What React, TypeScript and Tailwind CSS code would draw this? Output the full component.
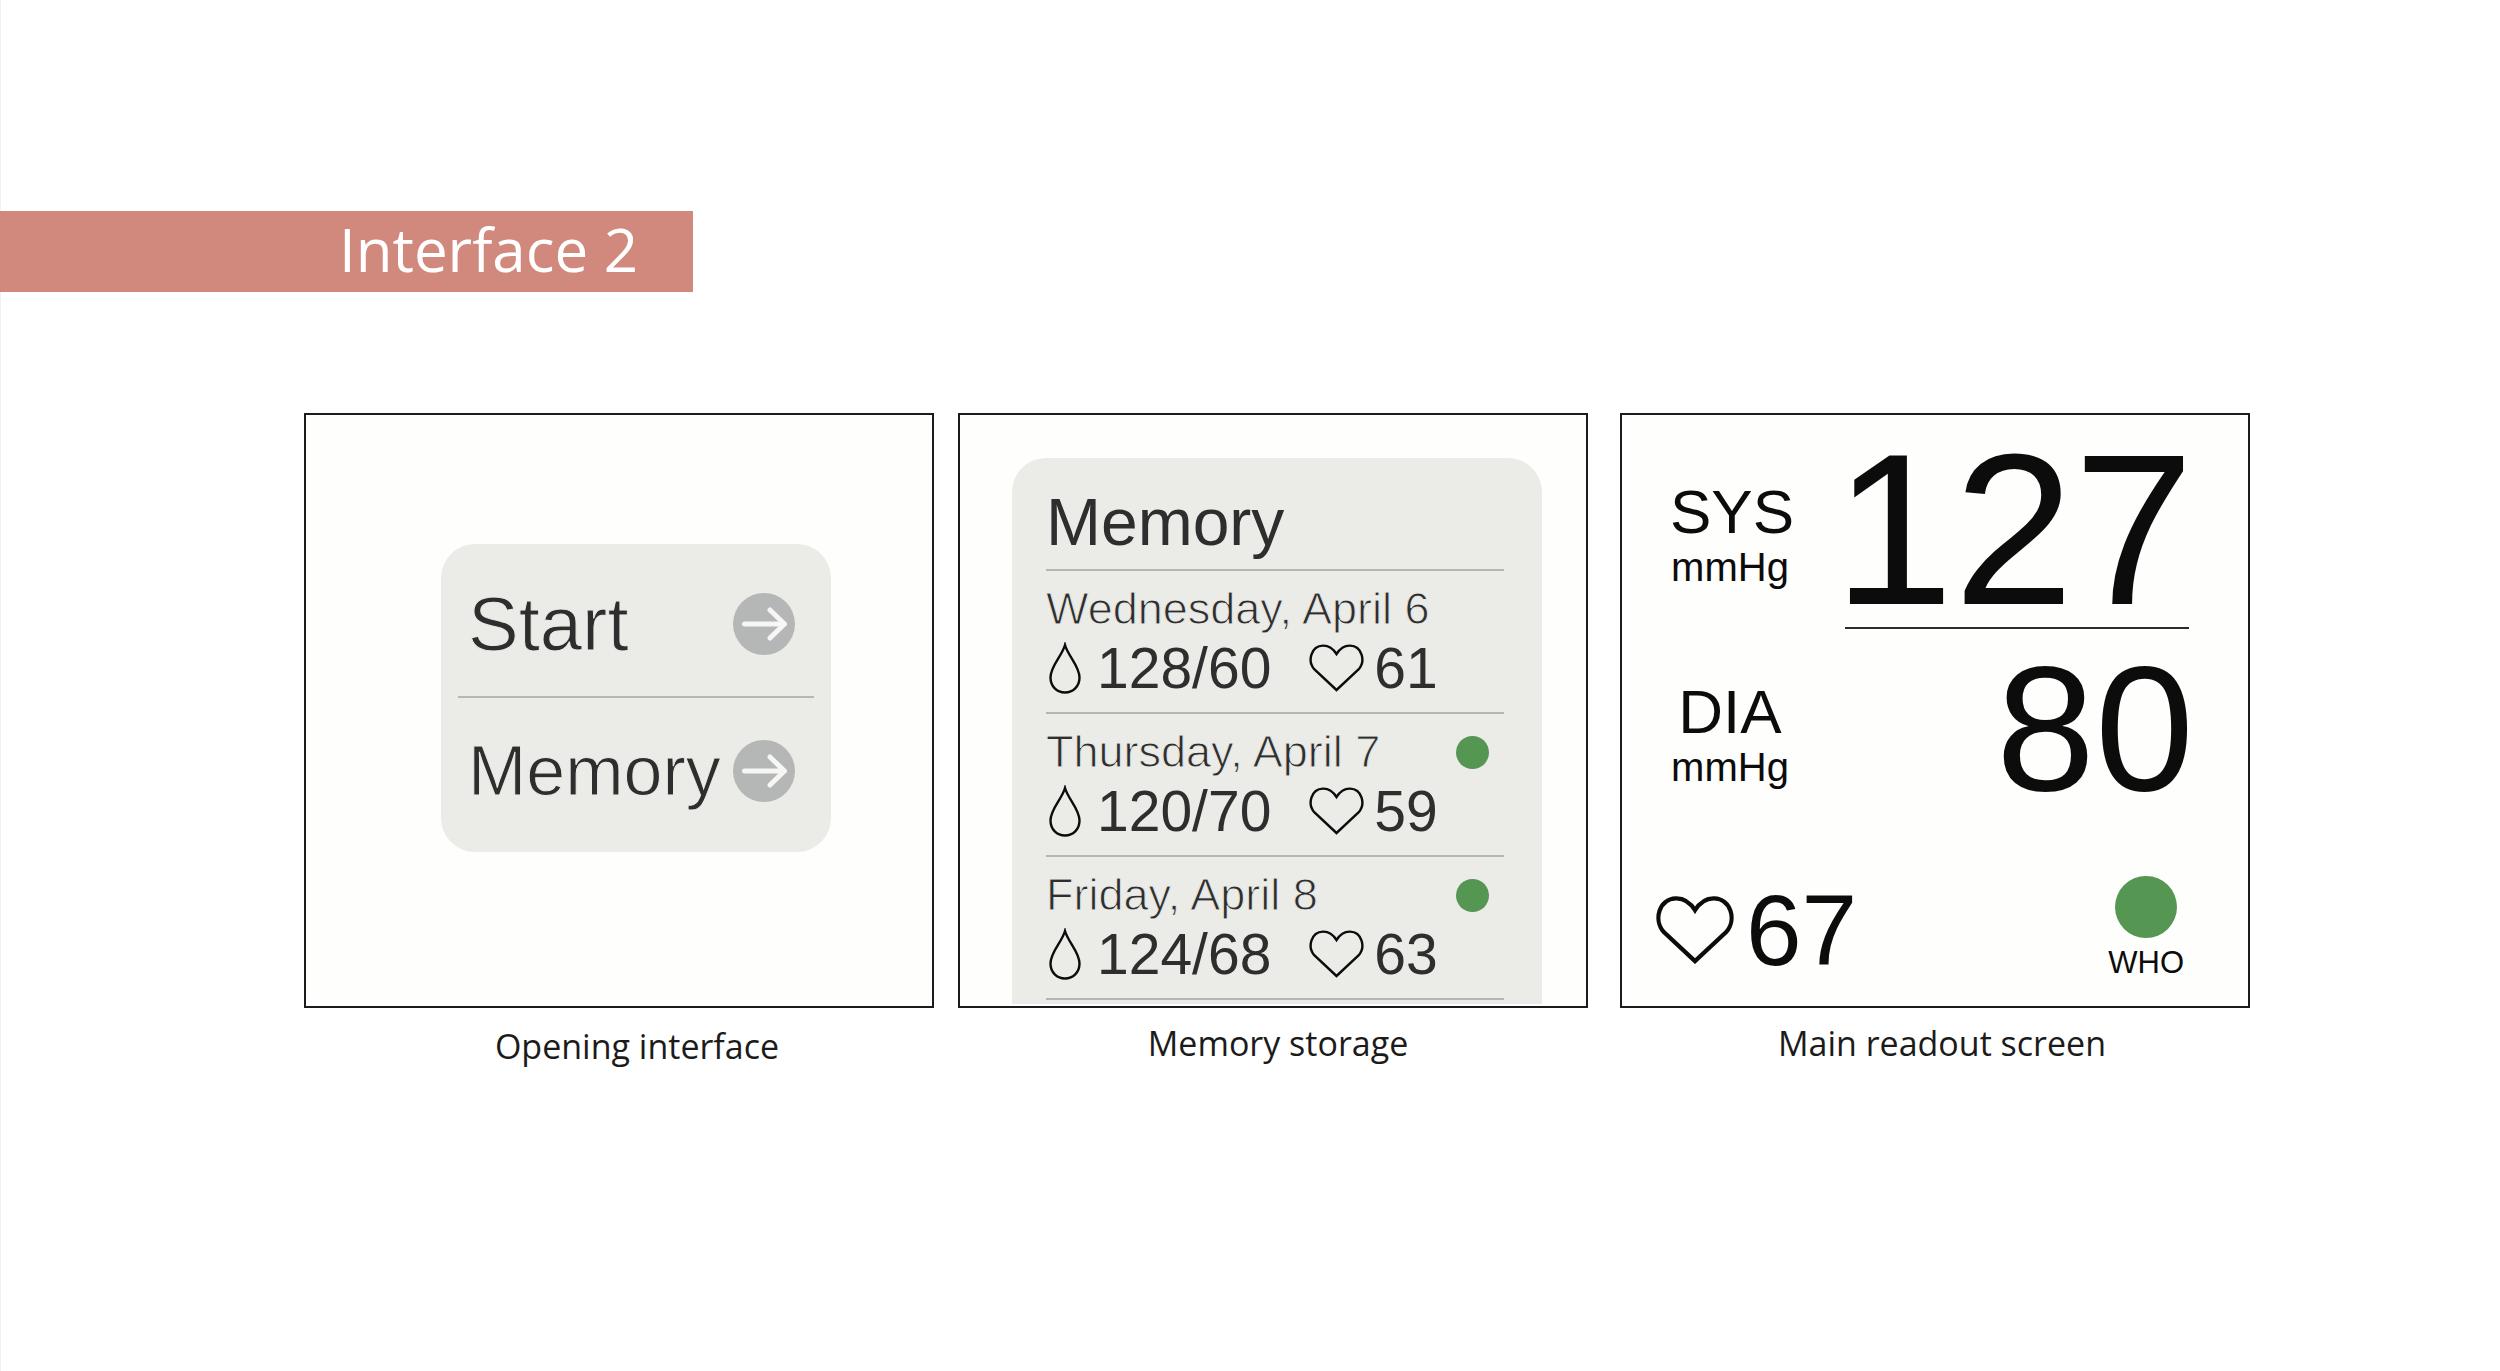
import type React from "react";

type Reading = {
  id: number;
  date: string;
  pressure: string;
  pulse: string;
  healthy: boolean;
};

const readings: Reading[] = [
  { id: 1, date: "Wednesday, April 6", pressure: "128/60", pulse: "61", healthy: false },
  { id: 2, date: "Thursday, April 7", pressure: "120/70", pulse: "59", healthy: true },
  { id: 3, date: "Friday, April 8", pressure: "124/68", pulse: "63", healthy: true },
];

const HeartIcon: React.FC<{ className: string; stroke: number }> = ({ className, stroke }) => (
  <svg viewBox="0 0 55 48" fill="none" stroke="#0c0c0c" strokeWidth={stroke} className={className} aria-hidden="true">
    <path d="M27.5 46 L5.5 25.5 C-2 17 2 2 14 1.6 C21 1.4 25 6 27.5 10 C30 6 34 1.4 41 1.6 C53 2 57 17 49.5 25.5 Z" />
  </svg>
);

const DropIcon: React.FC = () => (
  <svg viewBox="0 0 32 52" fill="none" stroke="#0c0c0c" strokeWidth="2.4" className="h-[52px] w-8 shrink-0" aria-hidden="true">
    <path d="M16 3 C19 14 30.5 24 30.5 35.5 C30.5 44.5 24 50.5 16 50.5 C8 50.5 1.5 44.5 1.5 35.5 C1.5 24 13 14 16 3 Z" />
  </svg>
);

const ArrowIcon: React.FC = () => (
  <svg viewBox="0 0 62 62" fill="none" className="size-[62px] shrink-0" aria-hidden="true">
    <circle cx="31" cy="31" r="31" fill="#b5b7b6" />
    <path
      d="M11.5 31 H51.5 M37 17 L51.5 31 L37 45"
      stroke="#f6f6f4"
      strokeWidth="5"
      strokeLinecap="round"
      strokeLinejoin="round"
    />
  </svg>
);

const Screen: React.FC<{
  caption: string;
  className?: string;
  captionClassName: string;
  children: React.ReactNode;
}> = ({ caption, className = "", captionClassName, children }) => (
  <figure className={`min-w-0 flex-1 ${className}`}>
    <div className="min-h-[595px] border-2 border-[#1c1b1d] bg-[#fefefd]">{children}</div>
    <figcaption
      className={`text-center font-['Open_Sans',sans-serif] text-[34px] leading-[48px] text-[#1c1b1a] ${captionClassName}`}
    >
      {caption}
    </figcaption>
  </figure>
);

const OpeningScreen: React.FC = () => (
  <div className="mt-[129px] mr-[101px] ml-[135px] rounded-[34px] bg-[#ebebe7] px-[17px] text-[#2e2e2e]">
    <button
      type="button"
      className="flex h-[154px] w-full items-center justify-between border-b-2 border-[#b7b8b6] pt-2 pr-[19px] pl-[10px] text-[76px] leading-[80px] [-webkit-text-stroke:1px_#ebebe7]"
    >
      Start
      <ArrowIcon />
    </button>
    <button
      type="button"
      className="flex h-[154px] w-full items-center justify-between pr-[19px] pb-2 pl-[10px] text-[70px] leading-[80px] [-webkit-text-stroke:1px_#ebebe7]"
    >
      Memory
      <ArrowIcon />
    </button>
  </div>
);

const MemoryScreen: React.FC = () => (
  <div className="mt-[43px] mr-[44px] ml-[52px] rounded-t-[34px] bg-[#ebebe7] pt-[31px] pr-[38px] pb-1 pl-[34px] text-[#2e2e2e]">
    <h2 className="border-b-2 border-[#b5b5b3] pb-[14px] text-[66px] leading-[66px]">Memory</h2>
    <ul>
      {readings.map((reading) => (
        <li key={reading.id} className="border-b-2 border-[#b5b5b3] pt-3 pb-[14px]">
          <div className="flex items-center justify-between pr-[15px]">
            <span className="text-[45px] leading-[52px] [-webkit-text-stroke:1px_#ebebe7]">{reading.date}</span>
            {reading.healthy && <span className="size-[33px] rounded-full bg-[#569653]" />}
          </div>
          <div className="mt-[3px] flex items-center pl-[3px] text-[57px] leading-[60px]">
            <DropIcon />
            <span className="ml-4">{reading.pressure}</span>
            <HeartIcon stroke={2.4} className="ml-[38px] h-12 w-[55px] shrink-0" />
            <span className="ml-[10px]">{reading.pulse}</span>
          </div>
        </li>
      ))}
    </ul>
  </div>
);

const Unit: React.FC<{ label: string; className: string }> = ({ label, className }) => (
  <div className={`w-[120px] text-center ${className}`}>
    <div className="text-[62px] leading-[62px]">{label}</div>
    <div className="mt-[2px] text-[40px] leading-[44px]">mmHg</div>
  </div>
);

const ReadoutScreen: React.FC = () => (
  <div className="pr-[54px] pb-[23px] text-[#0c0c0c]">
    <div className="flex justify-between pl-12">
      <Unit label="SYS" className="pt-[66px]" />
      <div className="pt-4">
        <div className="text-[216px] leading-[196px]">127</div>
        <hr className="mr-[5px] ml-[11px] border-t-2 border-[#2c2c2c]" />
      </div>
    </div>
    <div className="flex justify-between pl-12">
      <Unit label="DIA" className="pt-[52px]" />
      <div className="pt-5 text-[178px] leading-[160px]">80</div>
    </div>
    <div className="mt-[67px] flex items-center justify-between pr-[10px] pl-[34px]">
      <div className="flex items-center gap-3">
        <HeartIcon stroke={3} className="h-[68px] w-[78px]" />
        <span className="text-[100px] leading-[104px]">67</span>
      </div>
      <div className="flex flex-col items-center gap-[5px]">
        <span className="size-[62px] rounded-full bg-[#569653]" />
        <span className="text-[31px] leading-10">WHO</span>
      </div>
    </div>
  </div>
);

const App: React.FC = () => {
  return (
    <main className="min-h-screen border-l border-[#f1f1f1] bg-white pt-[211px] font-['Liberation_Sans',Arial,sans-serif]">
      <h1 className="-ml-px w-[693px] bg-[#d1897d] pr-[55px] pb-[5px] text-right font-['Open_Sans',sans-serif] text-[60px] leading-[76px] text-white">
        Interface 2
      </h1>
      <div className="mt-[121px] flex items-start pr-[250px] pl-[303px]">
        <Screen caption="Opening interface" captionClassName="pt-[14px] pl-9">
          <OpeningScreen />
        </Screen>
        <Screen caption="Memory storage" className="ml-6" captionClassName="pt-[11px] pl-[10px]">
          <MemoryScreen />
        </Screen>
        <Screen caption="Main readout screen" className="ml-8" captionClassName="pt-[11px] pl-[14px]">
          <ReadoutScreen />
        </Screen>
      </div>
    </main>
  );
};

export default App;
